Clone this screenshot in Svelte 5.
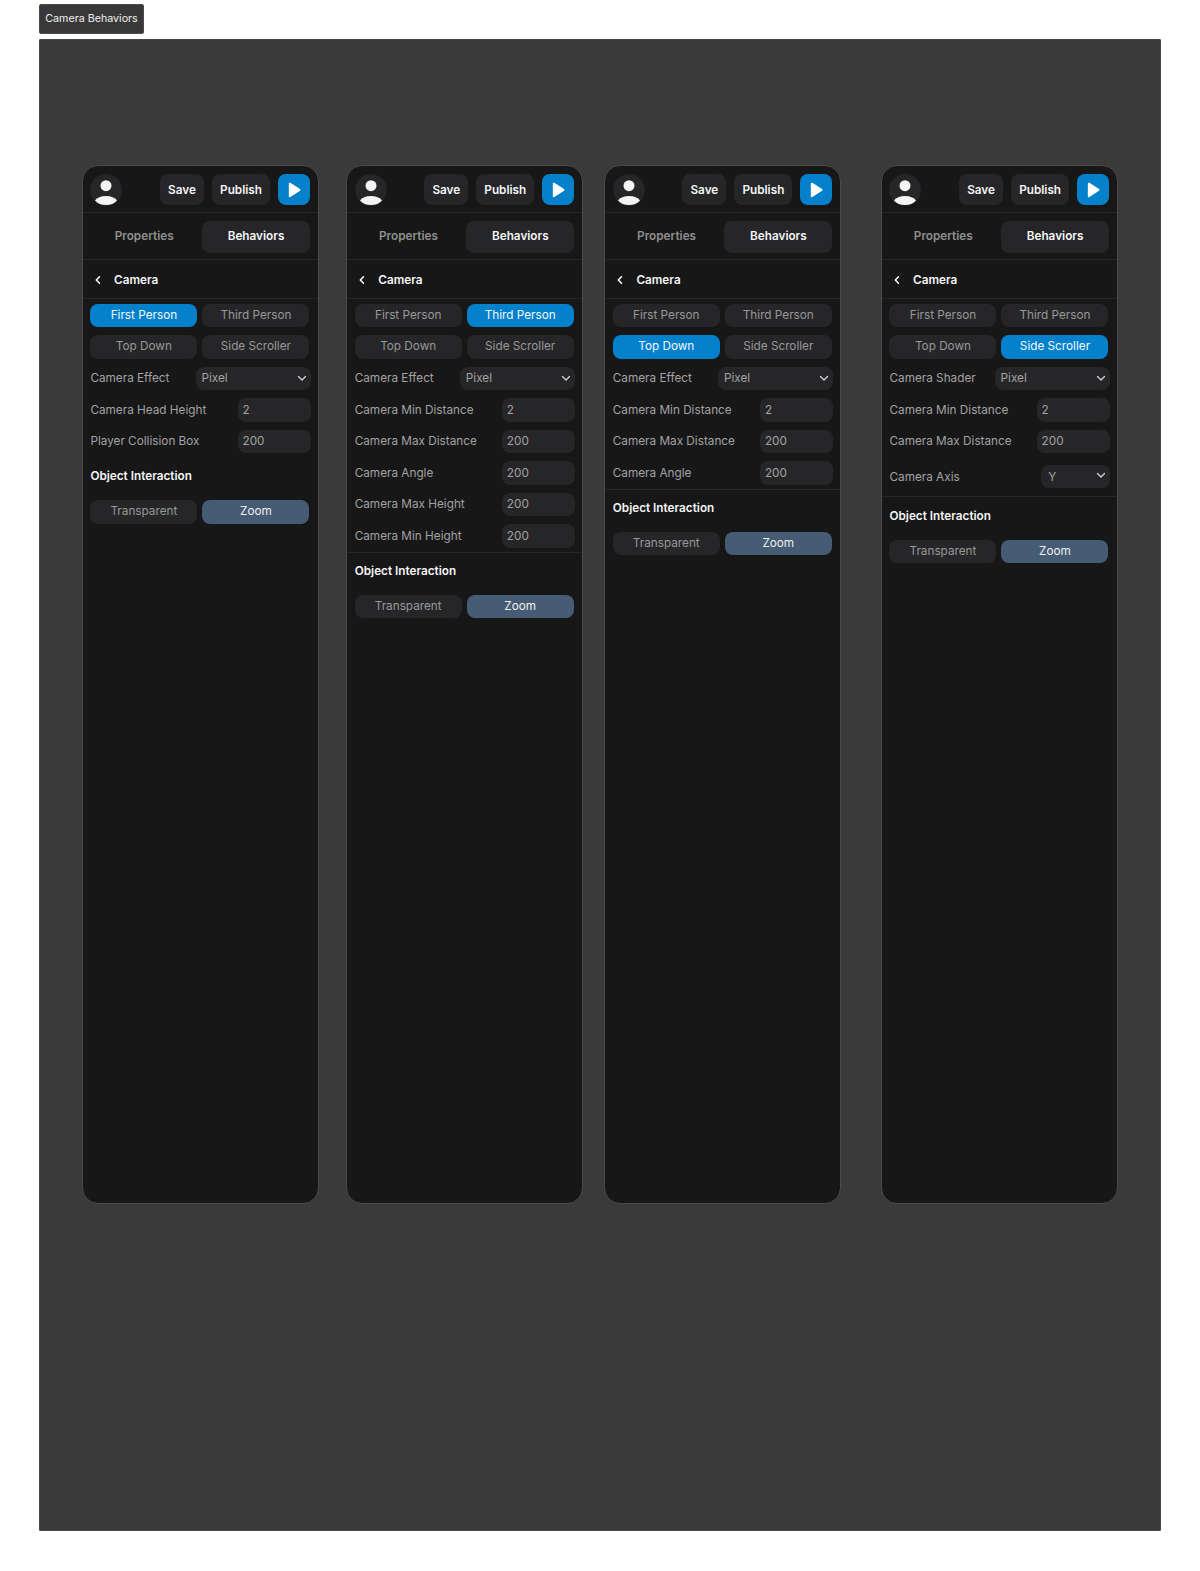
<script>
  const modes = ['First Person', 'Third Person', 'Top Down', 'Side Scroller'];
  const panels = [
    { cls: 'p1', active: 0, effect: 'Camera Effect', fields: ['Camera Head Height', 'Player Collision Box'], values: ['2', '200'], divider: false },
    { cls: 'p2', active: 1, effect: 'Camera Effect', fields: ['Camera Min Distance', 'Camera Max Distance', 'Camera Angle', 'Camera Max Height', 'Camera Min Height'], values: ['2', '200', '200', '200', '200'], divider: true },
    { cls: 'p3', active: 2, effect: 'Camera Effect', fields: ['Camera Min Distance', 'Camera Max Distance', 'Camera Angle'], values: ['2', '200', '200'], divider: true },
    { cls: 'p4', active: 3, effect: 'Camera Shader', fields: ['Camera Min Distance', 'Camera Max Distance'], values: ['2', '200'], divider: true, axis: true }
  ];
</script>

<div class="page">
  <div class="label">Camera Behaviors</div>
  <div class="canvas">
    {#each panels as p}
      <section class="panel {p.cls}">
        <header class="top">
          <svg class="avatar" viewBox="0 0 32 32" aria-hidden="true">
            <circle cx="16" cy="16" r="16" fill="#262628" />
            <circle cx="16" cy="11.7" r="5.5" fill="#f4f4f5" />
            <path d="M5 26.500C7 23.500 11 22 16 22s9 1.500 11 4.500C24.500 29.500 20.500 31 16 31S7.500 29.500 5 26.500Z" fill="#f4f4f5" />
          </svg>
          <div class="actions">
            <button class="act save">Save</button>
            <button class="act publish">Publish</button>
            <button class="play" aria-label="Play">
              <svg viewBox="0 0 32 32" width="32" height="32" aria-hidden="true">
                <path d="M11 9.600c0-.8.9-1.300 1.600-.9l9.800 6.400c.6.4.6 1.300 0 1.700l-9.800 6.400c-.7.4-1.600-.1-1.600-.9Z" fill="#fff" />
              </svg>
            </button>
          </div>
        </header>
        <nav class="tabs">
          <div class="tab">Properties</div>
          <div class="tab on">Behaviors</div>
        </nav>
        <div class="crumb">
          <svg viewBox="0 0 10 10" width="10" height="10" aria-hidden="true">
            <path d="M6.500 1.800 3.300 5l3.200 3.200" fill="none" stroke="#fff" stroke-width="1.500" stroke-linecap="round" stroke-linejoin="round" />
          </svg>
          <span>Camera</span>
        </div>
        <div class="body">
          <div class="seg">
            {#each modes as m, i}
              <div class="opt" class:blue={i === p.active}>{m}</div>
            {/each}
          </div>
          <div class="row">
            <span class="name">{p.effect}</span>
            <div class="select wide">
              <span>Pixel</span>
              <svg viewBox="0 0 10 10" width="10" height="10" aria-hidden="true">
                <path d="M1.500 3.500 5 7l3.500-3.500" fill="none" stroke="#d4d4d4" stroke-width="1.300" stroke-linecap="round" stroke-linejoin="round" />
              </svg>
            </div>
          </div>
          {#each p.fields as f, i}
            <div class="row">
              <span class="name">{f}</span>
              <div class="input">{p.values[i]}</div>
            </div>
          {/each}
          {#if p.axis}
            <div class="row axis">
              <span class="name">Camera Axis</span>
              <div class="select short">
                <span>Y</span>
                <svg viewBox="0 0 10 10" width="10" height="10" aria-hidden="true">
                  <path d="M1.500 1.500 5 5l3.500-3.500" fill="none" stroke="#d4d4d4" stroke-width="1.300" stroke-linecap="round" stroke-linejoin="round" />
                </svg>
              </div>
            </div>
          {/if}
        </div>
        <div class="interaction" class:rule={p.divider}>
          <h3>Object Interaction</h3>
          <div class="seg">
            <div class="opt">Transparent</div>
            <div class="opt slate">Zoom</div>
          </div>
        </div>
      </section>
    {/each}
  </div>
</div>

<style>
  :global(body) {
    margin: 0;
    background: #fff;
    font-family: Inter, "Liberation Sans", sans-serif;
  }
  .page {
    height: 1571px;
    padding: 4px 39.5px 0 39px;
    box-sizing: border-box;
  }
  .label {
    width: 105px;
    height: 29.5px;
    box-sizing: border-box;
    background: #383838;
    border: 1px solid #4a4a4a;
    border-radius: 2px;
    color: #f0f0f0;
    font-size: 10.7px;
    line-height: 27.5px;
    text-align: center;
    white-space: nowrap;
  }
  .canvas {
    margin-top: 5.5px;
    height: 1492px;
    box-sizing: border-box;
    background: #3a3a3a;
    border: 1px solid #474747;
    border-radius: 1px;
    padding: 125px 0 0 42px;
    display: flex;
    align-items: flex-start;
  }
  .panel {
    flex: none;
    width: 236.5px;
    height: 1038.5px;
    box-sizing: border-box;
    background: #171717;
    border: 1px solid #4a4a4a;
    border-radius: 16px;
    overflow: hidden;
    color: #a8a8a8;
    font-size: 11.75px;
  }
  .p2 { margin-left: 27.8px; }
  .p3 { margin-left: 21.6px; }
  .p4 { margin-left: 40.2px; }
  .top {
    height: 47px;
    box-sizing: border-box;
    padding: 8px 8px 0 7.4px;
    display: flex;
    justify-content: space-between;
    border-bottom: 1px solid #262626;
  }
  .avatar { width: 32px; height: 32px; flex: none; }
  .actions { display: flex; gap: 8px; }
  .act {
    height: 31px;
    border: 0;
    border-radius: 8px;
    background: #262628;
    color: #f5f5f5;
    font: 600 11.75px Inter, sans-serif;
    padding: 0;
  }
  .save { width: 44px; }
  .publish { width: 58px; }
  .play {
    width: 31.5px;
    height: 31px;
    border: 0;
    padding: 0;
    border-radius: 8px;
    background: #0581cc;
    display: flex;
    align-items: center;
    justify-content: center;
  }
  .tabs {
    height: 47px;
    box-sizing: border-box;
    padding: 8px 7.5px 0 7.4px;
    display: grid;
    grid-template-columns: 1fr 108px;
    gap: 4px;
    border-bottom: 1px solid #262626;
  }
  .tab {
    height: 31.5px;
    line-height: 31.5px;
    border-radius: 8px;
    text-align: center;
    font-weight: 600;
    color: #8f8f8f;
  }
  .tab.on { background: #262628; color: #f5f5f5; }
  .crumb {
    height: 39px;
    box-sizing: border-box;
    padding: 1px 0 0 10px;
    display: flex;
    align-items: center;
    gap: 11px;
    color: #f5f5f5;
    font-weight: 600;
    border-bottom: 1px solid #262626;
  }
  .body {
    padding: 4.7px 8px 0 7.4px;
    display: flex;
    flex-direction: column;
    gap: 8px;
  }
  .seg {
    display: grid;
    grid-template-columns: 107px 107px;
    gap: 8px 5px;
  }
  .opt {
    height: 23.5px;
    line-height: 23.5px;
    border-radius: 8px;
    background: #262628;
    color: #989898;
    text-align: center;
  }
  .opt.blue { background: #0581cc; color: #f2f8fc; }
  .opt.slate { background: #465b74; color: #f0f0f0; }
  .row {
    height: 23.5px;
    display: flex;
    align-items: center;
    justify-content: space-between;
  }
  .name { color: #a3a3a3; }
  .input, .select {
    height: 23.5px;
    box-sizing: border-box;
    border-radius: 8px;
    background: #262628;
    color: #a3a3a3;
    display: flex;
    align-items: center;
  }
  .input {
    width: 73px;
    padding-left: 5px;
    margin-right: -1px;
  }
  .select {
    justify-content: space-between;
    padding: 0 4px 0 5.5px;
  }
  .wide { width: 114.5px; margin-right: -1px; }
  .short { width: 69px; padding-left: 7.7px; margin-right: -1px; }
  .axis { margin-top: 3.8px; margin-bottom: 4px; }
  .interaction { padding: 0 8px 0 7.4px; margin-top: 16px; }
  .interaction.rule {
    margin-top: 4px;
    padding-top: 11.2px;
    border-top: 1px solid #262626;
  }
  .interaction h3 {
    margin: 0 0 16px;
    height: 15px;
    line-height: 15px;
    font-size: 11.75px;
    font-weight: 600;
    color: #f5f5f5;
  }
</style>
